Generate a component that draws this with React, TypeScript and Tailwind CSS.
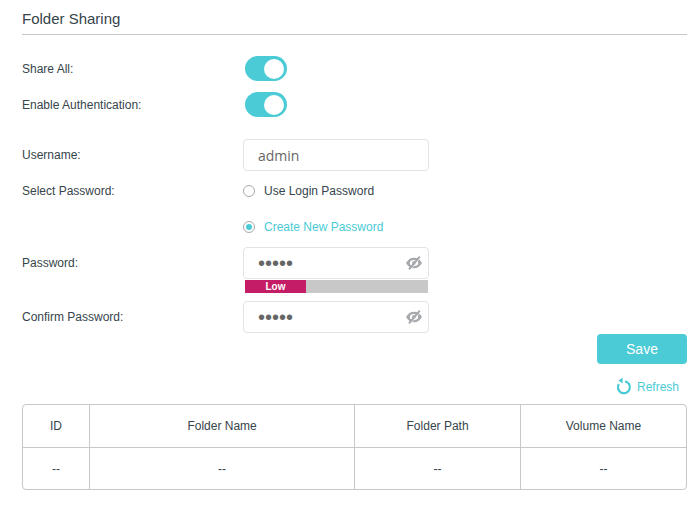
import { useState } from "react";

const columns = [
    { name: "ID", width: "w-[67px]" },
    { name: "Folder Name", width: "w-[40%]" },
    { name: "Folder Path", width: "w-1/4" },
    { name: "Volume Name", width: "" },
];

function Toggle({ id, label }: { id: string; label: string }) {
    const [on, setOn] = useState(true);
    return (
        <div className="flex h-[25px] items-center">
            <label htmlFor={id} className="w-[223px] shrink-0">{label}</label>
            <input
                id={id}
                type="checkbox"
                role="switch"
                checked={on}
                onChange={() => setOn(!on)}
                className="flex h-[25px] w-[42px] cursor-pointer appearance-none items-center rounded-full bg-[#b2b2b2] px-[3px] before:size-5 before:rounded-full before:bg-white before:content-[''] checked:justify-end checked:bg-[#4acbd6]"
            />
        </div>
    );
}

function EyeOff() {
    return (
        <svg viewBox="0 0 16 14" className="h-[14px] w-4" fill="#a7a9ac">
            <path d="M0 7C2 3.500 4.700 1.700 8 1.700s6 1.800 8 5.300c-2 3.500-4.700 5.300-8 5.300S2 10.500 0 7Z" />
            <ellipse cx="8" cy="7" rx="4.200" ry="3" fill="#fff" />
            <circle cx="8" cy="7" r="1.900" />
            <path d="M4.200 14 15 1.300" stroke="#fff" strokeWidth="0.700" />
            <path d="M3 13.400 13.800 0.600" stroke="#a7a9ac" strokeWidth="2" />
        </svg>
    );
}

function PasswordField({ id, label }: { id: string; label: string }) {
    const [visible, setVisible] = useState(false);
    return (
        <div className="flex h-8 items-center">
            <label htmlFor={id} className="w-[221px] shrink-0">{label}</label>
            <div className="flex h-8 w-[186px] items-center rounded border border-[#e3e3e3] pr-1.5 pl-3.5">
                <input
                    id={id}
                    type={visible ? "text" : "password"}
                    defaultValue="admin"
                    className="h-full min-w-0 flex-1 text-xl text-[#666] outline-none"
                />
                <button type="button" aria-label="Show password" onClick={() => setVisible(!visible)} className="cursor-pointer">
                    <EyeOff />
                </button>
            </div>
        </div>
    );
}

export default function App() {
    const [mode, setMode] = useState("new");

    return (
        <main className="bg-white pt-[7px] pr-[13px] pb-5 pl-[22px] font-['Liberation_Sans',Arial,sans-serif] text-xs text-[#36444b]">
            <h1 className="border-b border-[#c8c8c8] pb-[3px] text-[15px] leading-6">Folder Sharing</h1>

            <form onSubmit={(e) => e.preventDefault()}>
                {/* Switches */}
                <div className="mt-[21px] flex flex-col gap-[11px]">
                    <Toggle id="share-all" label="Share All:" />
                    <Toggle id="auth" label="Enable Authentication:" />
                </div>

                {/* Account */}
                <div className="mt-[22px] flex flex-col gap-1">
                    <div className="flex h-8 items-center">
                        <label htmlFor="username" className="w-[221px] shrink-0">Username:</label>
                        <input
                            id="username"
                            type="text"
                            defaultValue="admin"
                            className="h-8 w-[186px] rounded border border-[#e3e3e3] px-3.5 font-['Open_Sans',sans-serif] text-sm text-[#666] outline-none"
                        />
                    </div>

                    <div role="radiogroup" aria-labelledby="select-password" className="flex">
                        <span id="select-password" className="w-[221px] shrink-0 leading-8">Select Password:</span>
                        <div className="flex flex-col gap-1">
                            {[
                                { value: "login", label: "Use Login Password" },
                                { value: "new", label: "Create New Password" },
                            ].map((option) => (
                                <label key={option.value} className="flex h-8 cursor-pointer items-center gap-[9px] has-checked:text-[#4acbd6]">
                                    <input
                                        type="radio"
                                        name="password-mode"
                                        checked={mode === option.value}
                                        onChange={() => setMode(option.value)}
                                        className="grid size-3 appearance-none place-items-center rounded-full border border-[#a7a9ac] before:size-1.5 before:rounded-full before:content-[''] checked:before:bg-[#4acbd6]"
                                    />
                                    {option.label}
                                </label>
                            ))}
                        </div>
                    </div>

                    <PasswordField id="password" label="Password:" />
                </div>

                {/* Strength meter */}
                <div className="mt-px ml-[223px] w-[183px] bg-[#c8c8c8]">
                    <div className="w-1/3 bg-[#c41c66] text-center text-[10px] leading-[13px] font-bold text-white">Low</div>
                </div>

                <div className="mt-2">
                    <PasswordField id="confirm" label="Confirm Password:" />
                </div>

                <div className="mt-px flex justify-end">
                    <button type="submit" className="h-[30px] w-[90px] cursor-pointer rounded bg-[#4acbd6] text-sm text-white">
                        Save
                    </button>
                </div>
            </form>

            <div className="mt-[15px] flex justify-end pr-2">
                <button type="button" className="flex h-4 cursor-pointer items-center gap-[5px] text-[#4acbd6]">
                    <svg viewBox="0 0 16 16" className="size-4 overflow-visible" fill="none" stroke="currentColor">
                        <path d="M9 2.300A6 6 0 1 1 2.800 5" strokeWidth="2.200" />
                        <path d="M2.400 1.600 6.600-1.200V4.600Z" fill="currentColor" stroke="none" />
                    </svg>
                    Refresh
                </button>
            </div>

            <table className="mt-[9px] w-full table-fixed border-separate border-spacing-0 rounded border border-[#c8c8c8] text-center">
                <thead>
                    <tr>
                        {columns.map((col) => (
                            <th key={col.name} className={`${col.width} h-[43px] border-r border-b border-[#c8c8c8] font-normal last:border-r-0`}>
                                {col.name}
                            </th>
                        ))}
                    </tr>
                </thead>
                <tbody>
                    <tr>
                        {columns.map((col) => (
                            <td key={col.name} className="h-[41px] border-r border-[#c8c8c8] last:border-r-0">--</td>
                        ))}
                    </tr>
                </tbody>
            </table>
        </main>
    );
}
